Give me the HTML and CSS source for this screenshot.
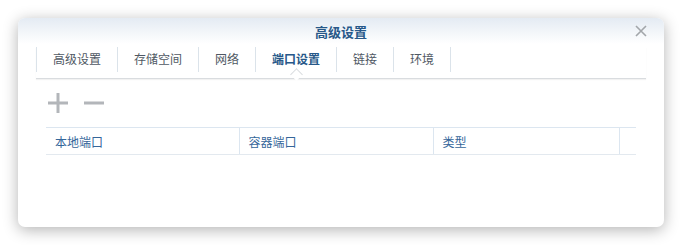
FILE: index.html
```html
<!DOCTYPE html>
<html>

<head>
    <meta charset="utf-8">
    <title>高级设置</title>
    <link rel="stylesheet" href="styles.css">
</head>

<body>
    <div class="window">
        <div class="titlebar">
            <span class="title">高级设置</span>
            <span class="close">
                <svg width="12" height="12" viewBox="0 0 12 12">
                    <path d="M1 1 L11 11 M11 1 L1 11" stroke="#a2a6aa" stroke-width="1.6" fill="none" />
                </svg>
            </span>
        </div>

        <div class="tabs">
            <div class="tab">高级设置</div>
            <div class="tab">存储空间</div>
            <div class="tab">网络</div>
            <div class="tab active">端口设置</div>
            <div class="tab">链接</div>
            <div class="tab last">环境</div>
        </div>

        <div class="toolbar">
            <!-- add / remove -->
            <span class="tool">
                <svg width="20" height="20" viewBox="0 0 20 20">
                    <path d="M0 10 H20 M10 0 V20" stroke="#b3b6ba" stroke-width="3" fill="none" />
                </svg>
            </span>
            <span class="tool">
                <svg width="20" height="20" viewBox="0 0 20 20">
                    <path d="M0 10 H20" stroke="#b3b6ba" stroke-width="3" fill="none" />
                </svg>
            </span>
        </div>

        <table class="grid">
            <thead>
                <tr>
                    <th class="c1">本地端口</th>
                    <th class="c2">容器端口</th>
                    <th class="c3">类型</th>
                    <th class="c4"></th>
                </tr>
            </thead>
        </table>
    </div>
</body>

</html>
```

FILE: styles.css
```css
* {
    box-sizing: border-box;
}

body {
    margin: 0;
    padding: 18px;
    background-color: #ffffff;
    font-family: "Noto Sans CJK SC", "Liberation Sans", sans-serif;
}

.window {
    width: 646px;
    height: 209px;
    background-color: #ffffff;
    border-radius: 7px;
    box-shadow: 0 3px 15px rgba(0, 0, 0, 0.3);
    overflow: hidden;
}

.titlebar {
    position: relative;
    height: 26px;
    line-height: 25px;
    text-align: center;
    background: linear-gradient(#e4ebf3, #ffffff);
}

.title {
    font-size: 13px;
    font-weight: bold;
    color: #275889;
}

.close {
    position: absolute;
    right: 17px;
    top: 7px;
    line-height: 0;
}

.tabs {
    display: flex;
    margin: 3px 18px 0 18px;
    padding-bottom: 6px;
    border-bottom: 1px solid #d9dcdf;
    box-shadow: 0 1px 1px rgba(0, 0, 0, 0.05);
}

.tab {
    position: relative;
    height: 25px;
    line-height: 24px;
    padding: 0 16px;
    border-left: 1px solid #dbe3ea;
    font-size: 12px;
    color: #4f5863;
}

.tab.last {
    border-right: 1px solid #dbe3ea;
}

.tab.active {
    color: #275889;
    font-weight: bold;
}

.tab.active::after {
    content: "";
    position: absolute;
    left: 50%;
    bottom: -7px;
    width: 8px;
    height: 8px;
    margin-left: -4px;
    background-color: #ffffff;
    border-left: 1px solid #d9dcdf;
    border-top: 1px solid #d9dcdf;
    transform: rotate(45deg);
    transform-origin: center;
}

.toolbar {
    display: flex;
    align-items: center;
    gap: 16px;
    height: 48px;
    padding-left: 30px;
}

.tool {
    line-height: 0;
}

.grid {
    margin: 0 28px;
    width: 590px;
    border-collapse: collapse;
    table-layout: fixed;
}

.grid th {
    height: 27px;
    padding: 0 9px;
    text-align: left;
    font-size: 12px;
    font-weight: normal;
    color: #35669a;
    border-top: 1px solid #dce6f0;
    border-bottom: 1px solid #e3e9ef;
    border-right: 1px solid #dce6f0;
}

.grid .c1 {
    width: 193px;
}

.grid .c2 {
    width: 194px;
}

.grid .c3 {
    width: 186px;
}

.grid .c4 {
    border-right: none;
}
```
